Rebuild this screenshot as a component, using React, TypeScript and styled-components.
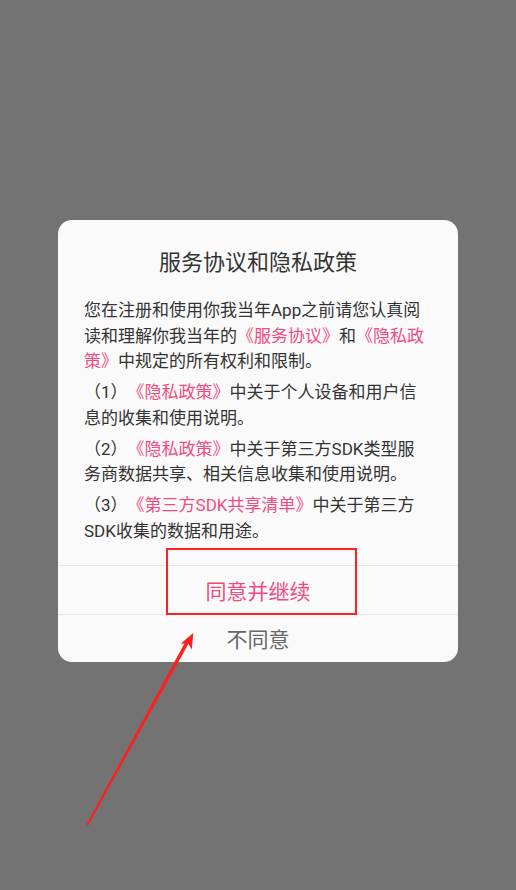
import React from 'react';
import styled, { createGlobalStyle } from 'styled-components';

const GlobalStyle = createGlobalStyle`
  html, body {
    margin: 0;
    padding: 0;
    background: #737373;
  }
`;

const Screen = styled.div`
  position: relative;
  width: 516px;
  height: 890px;
  background: #737373;
  display: flex;
  flex-direction: column;
  align-items: center;
  padding-top: 220px;
  box-sizing: border-box;
  font-family: Roboto, "Noto Sans CJK SC", sans-serif;
  text-spacing-trim: space-all;
`;

const Dialog = styled.div`
  width: 400px;
  background: #fafafa;
  border-radius: 14px;
  overflow: hidden;
  display: flex;
  flex-direction: column;
`;

const Title = styled.h2`
  margin: 0;
  padding-top: 28px;
  font-size: 22px;
  line-height: 30px;
  font-weight: 400;
  color: #333;
  text-align: center;
`;

const Body = styled.div`
  padding: 20px 29px 20.5px 26px;
  color: #333;
  font-size: 17px;
  line-height: 25.5px;
  text-spacing-trim: space-all;
`;

const Para = styled.p`
  margin: 0;
  & + & {
    margin-top: 5.5px;
  }
`;

const Link = styled.span`
  color: #f44a7f;
`;

interface ActionProps {
  $primary?: boolean;
}

const Action = styled.button<ActionProps>`
  height: ${({ $primary }) => ($primary ? '49px' : '48px')};
  border: none;
  border-top: 1px solid #e6e6e6;
  background: transparent;
  font-family: inherit;
  font-size: 21px;
  color: ${({ $primary }) => ($primary ? '#f44a7f' : '#666')};
  padding: 0;
`;

const Highlight = styled.div`
  position: absolute;
  left: 166px;
  top: 548px;
  width: 191px;
  height: 67px;
  border: 2px solid #ff2020;
  box-sizing: border-box;
  pointer-events: none;
`;

const ArrowLayer = styled.svg`
  position: absolute;
  left: 0;
  top: 0;
  pointer-events: none;
`;

const Arrow = () => (
  <ArrowLayer width="516" height="890" viewBox="0 0 516 890">
    <polygon points="86.4,824.6 88.2,825.4 189.8,641.2 186.6,639.4" fill="#ff1f1f" />
    <polygon points="193.3,633 191.8,649.5 188,643.3 180.6,643.8" fill="#ff1f1f" />
  </ArrowLayer>
);

export default function App() {
  return (
    <Screen>
      <GlobalStyle />
      <Dialog>
        <Title>服务协议和隐私政策</Title>
        <Body>
          <Para>
            您在注册和使用你我当年App之前请您认真阅读和理解你我当年的
            <Link>《服务协议》</Link>和<Link>《隐私政策》</Link>中规定的所有权利和限制。
          </Para>
          <Para>
            （1）<Link>《隐私政策》</Link>中关于个人设备和用户信息的收集和使用说明。
          </Para>
          <Para>
            （2）<Link>《隐私政策》</Link>中关于第三方SDK类型服务商数据共享、相关信息收集和使用说明。
          </Para>
          <Para>
            （3）<Link>《第三方SDK共享清单》</Link>中关于第三方SDK收集的数据和用途。
          </Para>
        </Body>
        <Action $primary>同意并继续</Action>
        <Action>不同意</Action>
      </Dialog>
      <Highlight />
      <Arrow />
    </Screen>
  );
}
